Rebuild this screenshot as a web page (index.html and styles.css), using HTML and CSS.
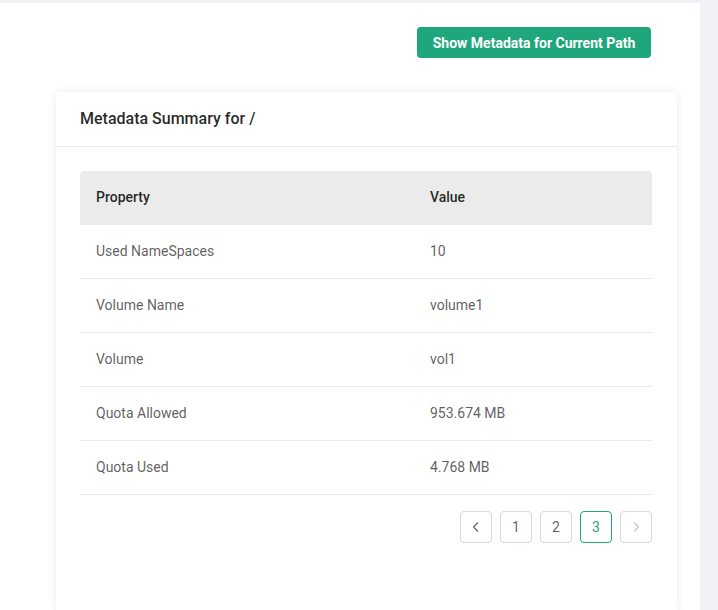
FILE: index.html
```html
<!DOCTYPE html>
<html>
<head>
<meta charset="utf-8">
<link rel="stylesheet" href="styles.css">
</head>
<body>
<div class="shell">
  <main class="content">
    <div class="toolbar">
      <button class="btn-primary">Show Metadata for Current Path</button>
    </div>
    <section class="card">
      <header class="card-head">Metadata Summary for /</header>
      <div class="card-body">
        <table class="meta-table">
          <thead>
            <tr><th class="col-prop">Property</th><th>Value</th></tr>
          </thead>
          <tbody>
            <tr><td>Used NameSpaces</td><td>10</td></tr>
            <tr><td>Volume Name</td><td>volume1</td></tr>
            <tr><td>Volume</td><td>vol1</td></tr>
            <tr><td>Quota Allowed</td><td>953.674 MB</td></tr>
            <tr><td>Quota Used</td><td>4.768 MB</td></tr>
          </tbody>
        </table>
        <nav class="pager">
          <span class="page-item arrow">
            <svg width="12" height="12" viewBox="0 0 12 12"><path d="M8 1.5 3.5 6 8 10.5" fill="none" stroke="currentColor" stroke-width="1.1"/></svg>
          </span>
          <span class="page-item">1</span>
          <span class="page-item">2</span>
          <span class="page-item active">3</span>
          <span class="page-item arrow disabled">
            <svg width="12" height="12" viewBox="0 0 12 12"><path d="M4 1.5 8.5 6 4 10.5" fill="none" stroke="currentColor" stroke-width="1.1"/></svg>
          </span>
        </nav>
      </div>
    </section>
  </main>
</div>
</body>
</html>
```

FILE: styles.css
```css
* { box-sizing: border-box; }
html, body { margin: 0; height: 100%; }
body {
  background: #f0f2f5;
  font-family: Roboto, "Liberation Sans", sans-serif;
  font-size: 14px;
  color: rgba(0,0,0,0.65);
  overflow: hidden;
}
.shell {
  padding: 3px 18px 0 0;
  height: 100%;
}
.content {
  background: #fff;
  height: 100%;
  padding: 24px 23px 0 56px;
}
.toolbar {
  display: flex;
  justify-content: flex-end;
  padding-right: 26px;
}
.btn-primary {
  background: #1fa67a;
  color: #fff;
  border: none;
  border-radius: 4px;
  height: 31px;
  width: 234px;
  font-family: Roboto, "Liberation Sans", sans-serif;
  font-size: 14px;
  font-weight: 700;
  padding: 0;
}
.card {
  margin-top: 34px;
  background: #fff;
  box-shadow: 0 0 8px rgba(0,0,0,0.09);
  height: 520px;
}
.card-head {
  height: 55px;
  padding: 0 24px 2px;
  display: flex;
  align-items: center;
  font-size: 16px;
  font-weight: 500;
  color: rgba(0,0,0,0.85);
  border-bottom: 1px solid #e8e8e8;
}
.card-body {
  padding: 24px 25px 24px 24px;
}
.meta-table {
  width: 100%;
  border-collapse: separate;
  border-spacing: 0;
}
.meta-table th {
  background: #ebebeb;
  text-align: left;
  font-weight: 500;
  color: rgba(0,0,0,0.85);
  height: 54px;
  padding: 0 16px 2px;
  border-bottom: 1px solid #e8e8e8;
}
.meta-table th:first-child { border-top-left-radius: 4px; }
.meta-table th:last-child { border-top-right-radius: 4px; }
.meta-table .col-prop { width: 334px; }
.meta-table td {
  height: 54px;
  padding: 0 16px 2px;
  border-bottom: 1px solid #e8e8e8;
}
.pager {
  display: flex;
  justify-content: flex-end;
  gap: 8px;
  margin-top: 16px;
}
.page-item {
  width: 32px;
  height: 32px;
  border: 1px solid #d9d9d9;
  border-radius: 4px;
  display: flex;
  align-items: center;
  justify-content: center;
  color: rgba(0,0,0,0.65);
  font-size: 14px;
}
.page-item.active {
  border-color: #1fa67a;
  color: #1fa67a;
}
.page-item.disabled { color: rgba(0,0,0,0.25); }
```
